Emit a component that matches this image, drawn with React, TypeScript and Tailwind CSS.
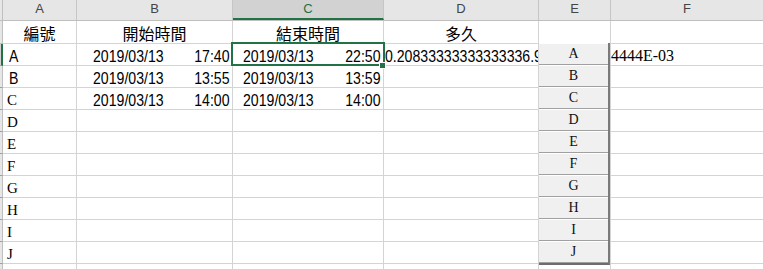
import React from 'react';

// Sheet geometry: widths include each cell's right gridline
const sans = "font-['Liberation_Sans','Noto_Sans_CJK_TC',sans-serif]";
const serif = "font-['Liberation_Serif','Noto_Serif_CJK_TC',serif]";

// Narrow numeric glyphs, squeezed horizontally like the sheet's default font
const narrowL = 'inline-block origin-left scale-x-[0.83]';
const narrowR = 'inline-block origin-right scale-x-[0.83]';

type Row = {
  label: string;
  serifLabel?: boolean;
  start?: [string, string];
  end?: [string, string];
  diff?: string;
  tail?: string;
  active?: boolean;
};

const rows: Row[] = [
  {
    label: 'A',
    start: ['2019/03/13', '17:40'],
    end: ['2019/03/13', '22:50'],
    diff: '0.20833333333333336.9',
    tail: '4444E-03',
    active: true,
  },
  { label: 'B', start: ['2019/03/13', '13:55'], end: ['2019/03/13', '13:59'] },
  { label: 'C', serifLabel: true, start: ['2019/03/13', '14:00'], end: ['2019/03/13', '14:00'] },
  { label: 'D', serifLabel: true },
  { label: 'E', serifLabel: true },
  { label: 'F', serifLabel: true },
  { label: 'G', serifLabel: true },
  { label: 'H', serifLabel: true },
  { label: 'I', serifLabel: true },
  { label: 'J', serifLabel: true },
  { label: '' },
];

const listItems = ['A', 'B', 'C', 'D', 'E', 'F', 'G', 'H', 'I', 'J'];

function HeaderRow() {
  const cell = 'h-full border-r border-[#c6c6c6] flex justify-center text-[13px] leading-[17px]';
  return (
    <div className={`flex h-[21px] border-b border-[#bfbfbf] bg-[#e6e6e6] text-[#444] ${sans}`}>
      <div className="w-[3px] h-full border-r border-[#bfbfbf]" />
      <div className={`${cell} w-[74px]`}>A</div>
      <div className={`${cell} w-[156px]`}>B</div>
      <div className={`${cell} w-[151px] bg-[#d2d2d2] text-[#217346] border-b-2 border-b-[#217346]`}>C</div>
      <div className={`${cell} w-[155px]`}>D</div>
      <div className={`${cell} w-[72px]`}>E</div>
      <div className={`${cell} flex-1 border-r-0`}>F</div>
    </div>
  );
}

function TitleRow() {
  const cell = 'h-full border-r border-b border-[#d4d4d4] flex justify-center items-end text-[16px] leading-[16px]';
  return (
    <div className={`flex h-[23px] text-black ${sans}`}>
      <div className="w-[3px] h-full border-r border-b border-[#bfbfbf] bg-[#e6e6e6]" />
      <div className={`${cell} w-[74px]`}>編號</div>
      <div className={`${cell} w-[156px]`}>開始時間</div>
      <div className={`${cell} w-[151px]`}>結束時間</div>
      <div className={`${cell} w-[155px]`}>多久</div>
      <div className={`${cell} w-[72px]`} />
      <div className={`${cell} flex-1 border-r-0`} />
    </div>
  );
}

function DataRow({ row }: { row: Row }) {
  const cell = 'h-full border-r border-b border-[#d4d4d4] overflow-hidden whitespace-nowrap';
  const text = `text-[17px] leading-[16px] pt-[5px] ${sans}`;
  return (
    <div className="flex h-[22px] text-black">
      <div
        className={
          row.active
            ? 'w-[3px] h-full border-r-2 border-b border-r-[#217346] border-b-[#9f9f9f] bg-[#d2d2d2]'
            : 'w-[3px] h-full border-r border-b border-r-[#bfbfbf] border-b-[#9f9f9f] bg-[#e6e6e6]'
        }
      />
      {row.serifLabel ? (
        <div className={`${cell} w-[74px] pl-[4px] text-[15px] leading-[19px] pt-[3px] ${serif}`}>{row.label}</div>
      ) : (
        <div className={`${cell} w-[74px] pl-[6px] ${text}`}>
          <span className={narrowL}>{row.label}</span>
        </div>
      )}
      <div className={`${cell} w-[156px] flex justify-between pl-[16px] pr-[2px] ${text}`}>
        {row.start && (
          <>
            <span className={narrowL}>{row.start[0]}</span>
            <span className={narrowR}>{row.start[1]}</span>
          </>
        )}
      </div>
      <div className={`${cell} w-[151px] flex justify-between pl-[10px] pr-[2px] ${text}`}>
        {row.end && (
          <>
            <span className={narrowL}>{row.end[0]}</span>
            <span className={narrowR}>{row.end[1]}</span>
          </>
        )}
      </div>
      <div className={`${cell} w-[155px] pl-[1px] ${text}`}>
        {row.diff && <span className={narrowL}>{row.diff}</span>}
      </div>
      <div className={`${cell} w-[72px]`} />
      <div className={`${cell} flex-1 border-r-0 text-[16px] leading-[19px] pt-[2px] ${serif}`}>{row.tail}</div>
    </div>
  );
}

function ListBox() {
  return (
    <div className="absolute left-[539px] top-[43px] w-[71px] border-r-2 border-b-2 border-r-[#7a7a7a] border-b-[#6d6d6d] bg-[#f0f0f0]">
      {listItems.map((item) => (
        <div
          key={item}
          className={`h-[22px] border-t border-b border-t-white border-b-[#a0a0a0] flex justify-center text-[14px] leading-[18px] pt-[1px] text-[#111] ${serif}`}
        >
          {item}
        </div>
      ))}
    </div>
  );
}

export default function App() {
  return (
    <div className="relative w-[763px] h-[269px] overflow-hidden bg-white">
      <HeaderRow />
      <TitleRow />
      {rows.map((row, i) => (
        <DataRow key={i} row={row} />
      ))}

      <ListBox />

      {/* active cell C2 with its fill handle */}
      <div className="absolute left-[231px] top-[42px] w-[154px] h-[24px] border-2 border-[#217346]" />
      <div className="absolute left-[379px] top-[62px] w-[7px] h-[7px] bg-[#217346] border border-white" />
    </div>
  );
}
